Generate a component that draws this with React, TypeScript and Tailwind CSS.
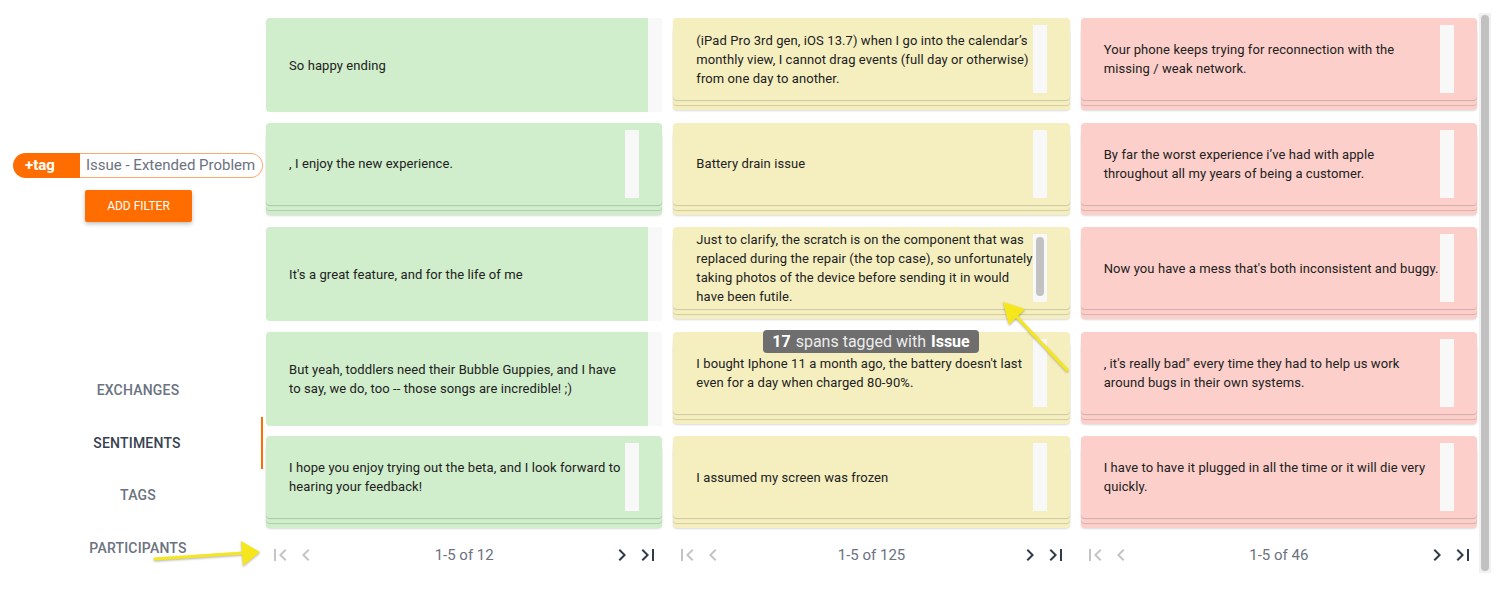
import React from 'react';

type Tone = 'green' | 'yellow' | 'red';

type CardItem = {
  text: string;
  stacked: boolean;
  thumb?: boolean;
};

type Column = {
  tone: Tone;
  total: string;
  cards: CardItem[];
};

const TONES: Record<Tone, { bg: string; stack: string }> = {
  green: {
    bg: 'bg-[#d0edcc]',
    stack:
      'shadow-[0_1px_1px_rgba(0,0,0,0.17),0_5px_0_#d0edcc,0_6px_1px_rgba(0,0,0,0.15),0_10px_0_#d0edcc,0_11px_2px_rgba(0,0,0,0.15)]',
  },
  yellow: {
    bg: 'bg-[#f5efc0]',
    stack:
      'shadow-[0_1px_1px_rgba(0,0,0,0.17),0_5px_0_#f5efc0,0_6px_1px_rgba(0,0,0,0.15),0_10px_0_#f5efc0,0_11px_2px_rgba(0,0,0,0.15)]',
  },
  red: {
    bg: 'bg-[#fccfca]',
    stack:
      'shadow-[0_1px_1px_rgba(0,0,0,0.17),0_5px_0_#fccfca,0_6px_1px_rgba(0,0,0,0.15),0_10px_0_#fccfca,0_11px_2px_rgba(0,0,0,0.15)]',
  },
};

const COLUMNS: Column[] = [
  {
    tone: 'green',
    total: '1-5 of 12',
    cards: [
      { text: 'So happy ending', stacked: false },
      { text: ', I enjoy the new experience.', stacked: true },
      { text: "It's a great feature, and for the life of me", stacked: false },
      {
        text: 'But yeah, toddlers need their Bubble Guppies, and I have to say, we do, too -- those songs are incredible! ;)',
        stacked: false,
      },
      {
        text: 'I hope you enjoy trying out the beta, and I look forward to hearing your feedback!',
        stacked: true,
      },
    ],
  },
  {
    tone: 'yellow',
    total: '1-5 of 125',
    cards: [
      {
        text: "(iPad Pro 3rd gen, iOS 13.7) when I go into the calendar’s monthly view, I cannot drag events (full day or otherwise) from one day to another.",
        stacked: true,
      },
      { text: 'Battery drain issue', stacked: true },
      {
        text: 'Just to clarify, the scratch is on the component that was replaced during the repair (the top case), so unfortunately taking photos of the device before sending it in would have been futile.',
        stacked: true,
        thumb: true,
      },
      {
        text: "I bought Iphone 11 a month ago, the battery doesn't last even for a day when charged 80-90%.",
        stacked: true,
      },
      { text: 'I assumed my screen was frozen', stacked: true },
    ],
  },
  {
    tone: 'red',
    total: '1-5 of 46',
    cards: [
      {
        text: 'Your phone keeps trying for reconnection with the missing / weak network.',
        stacked: true,
      },
      {
        text: 'By far the worst experience i’ve had with apple throughout all my years of being a customer.',
        stacked: true,
      },
      {
        text: "Now you have a mess that's both inconsistent and buggy.",
        stacked: true,
      },
      {
        text: ', it\'s really bad" every time they had to help us work around bugs in their own systems.',
        stacked: true,
      },
      {
        text: 'I have to have it plugged in all the time or it will die very quickly.',
        stacked: true,
      },
    ],
  },
];

const NAV = ['EXCHANGES', 'SENTIMENTS', 'TAGS', 'PARTICIPANTS'];

export default function App() {
  return (
    <div className="relative flex w-[1504px] h-[591px] overflow-hidden bg-white font-[Roboto,sans-serif]">
      <Sidebar />

      <div className="grid grid-cols-3 gap-x-[11px] w-[1211px] pt-[18px]">
        {COLUMNS.map((col) => (
          <SentimentColumn key={col.tone} column={col} />
        ))}
      </div>

      {/* page scrollbar */}
      <div className="ml-[2px] mt-[13px] w-[12px] h-[560px] bg-[#f1f1f1] px-[2px] py-[2px]">
        <div className="h-full w-full rounded-full bg-[#c1c1c1]" />
      </div>

      {/* hover tooltip */}
      <div className="absolute left-[763px] top-[330px] h-[23px] w-[216px] flex items-center justify-center rounded-[4px] bg-[#6e6e6e] text-[16px] text-[#ececec]">
        <span className="font-bold text-white">17</span>
        <span className="mx-[5px]">spans tagged with</span>
        <span className="font-bold text-white">Issue</span>
      </div>

      <Arrows />
    </div>
  );
}

function Sidebar() {
  return (
    <aside className="w-[266px] shrink-0 flex flex-col pt-[153px]">
      <div className="ml-[13px] w-[250px] h-[25px] flex text-[15px]">
        <div className="w-[67px] flex items-center pl-[12px] rounded-l-full bg-[#ff6d00] font-bold text-white">
          +tag
        </div>
        <div className="flex-1 flex items-center pl-[6px] rounded-r-full border border-l-0 border-[#ffa86b] text-[#6b7280]">
          Issue - Extended Problem
        </div>
      </div>

      <button
        type="button"
        className="ml-[85px] mt-[12px] w-[107px] h-[32px] rounded-[2px] bg-[#ff6d00] text-white text-[12px] font-normal shadow-[0_2px_4px_rgba(0,0,0,0.25)]"
      >
        ADD FILTER
      </button>

      <nav className="mt-[142px] w-[263px] flex flex-col">
        {NAV.map((item) => {
          const active = item === 'SENTIMENTS';
          return (
            <div
              key={item}
              className={`h-[52.7px] pl-[13px] flex items-center justify-center text-[14px] font-medium tracking-[0.2px] ${
                active
                  ? 'text-[#374151] border-r-2 border-[#ff6d00]'
                  : 'text-[#6b7280]'
              }`}
            >
              {item}
            </div>
          );
        })}
      </nav>
    </aside>
  );
}

function SentimentColumn({ column }: { column: Column }) {
  const tone = TONES[column.tone];
  return (
    <div className="flex flex-col">
      <div className="flex flex-col gap-[10.5px]">
        {column.cards.map((card, i) =>
          card.stacked ? (
            <div key={i} className="h-[94px]">
              <div
                className={`h-[82px] flex items-center rounded-[4px] pl-[23px] ${tone.bg} ${tone.stack}`}
              >
                <p className="flex-1 min-w-0 text-[13px] leading-[19px] tracking-[0.09px] text-[#212121]">
                  {card.text}
                </p>
                <div className="self-stretch my-[7px] mr-[23px] w-[14px] bg-[#f8f8f8] flex justify-center pt-[3px] pb-[6px]">
                  {card.thumb && (
                    <div className="w-[8px] h-full rounded-full bg-[#c2c2c2]" />
                  )}
                </div>
              </div>
            </div>
          ) : (
            <div key={i} className="h-[94px] flex">
              <div
                className={`flex-1 flex items-center rounded-l-[4px] pl-[23px] pr-[23px] ${tone.bg}`}
              >
                <p className="text-[13px] leading-[19px] tracking-[0.09px] text-[#212121]">
                  {card.text}
                </p>
              </div>
              <div className="w-[14px] bg-[#f8f8f8]" />
            </div>
          )
        )}
      </div>

      <div className="mt-[9px] h-[32px] px-[1px] flex items-center">
        <PageIcon d="M18.41 16.59L13.82 12l4.59-4.59L17 6l-6 6 6 6zM6 6h2v12H6z" disabled />
        <PageIcon d="M15.41 7.41L14 6l-6 6 6 6 1.41-1.41L10.83 12z" disabled />
        <span className="flex-1 text-center text-[15px] text-[#6b7280]">
          {column.total}
        </span>
        <PageIcon d="M10 6L8.59 7.41 13.17 12l-4.58 4.59L10 18l6-6z" />
        <PageIcon d="M5.59 7.41L10.18 12l-4.59 4.59L7 18l6-6-6-6zM16 6h2v12h-2z" />
      </div>
    </div>
  );
}

function PageIcon({ d, disabled }: { d: string; disabled?: boolean }) {
  return (
    <span className="w-[26px] h-[26px] flex items-center justify-center">
      <svg
        viewBox="0 0 24 24"
        width="24"
        height="24"
        className={disabled ? 'fill-[#c4c4c4]' : 'fill-[#2f3a4a]'}
      >
        <path d={d} />
      </svg>
    </span>
  );
}

function Arrows() {
  return (
    <>
      <svg
        className="absolute left-[995px] top-[295px] drop-shadow-[0_1px_1px_rgba(0,0,0,0.3)]"
        width="80"
        height="85"
        viewBox="0 0 80 85"
      >
        <line x1="72" y1="75" x2="20" y2="20" stroke="#f6e61c" strokeWidth="3" strokeLinecap="round" />
        <polygon points="8,7 30,14 14,30" fill="#f6e61c" />
      </svg>
      <svg
        className="absolute left-[150px] top-[538px] drop-shadow-[0_1px_1px_rgba(0,0,0,0.3)]"
        width="115"
        height="32"
        viewBox="0 0 115 32"
      >
        <line x1="5" y1="21" x2="94" y2="15" stroke="#f6e61c" strokeWidth="3" strokeLinecap="round" />
        <polygon points="110,14 91,3 93,28" fill="#f6e61c" />
      </svg>
    </>
  );
}
